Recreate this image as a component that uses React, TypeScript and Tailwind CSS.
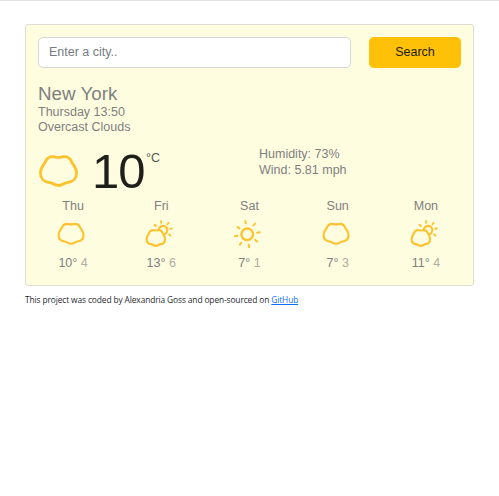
type IconKind = "cloud" | "partly" | "sun";

const CLOUD =
  "M19.5 2.5C17 2.5 16 1.7 13.6 1.7C10.2 1.7 8 3.2 6.6 6.4C5.4 9.4 1.4 12.4 1.4 18C1.4 23.4 5 26.9 10 27.3C13.8 27.6 15 30.5 19.5 30.5C24 30.5 25.2 27.6 29 27.3C34 26.9 37.6 23.4 37.6 18C37.6 12.4 33.6 9.4 32.4 6.4C31 3.2 28.8 1.7 25.4 1.7C23 1.7 22 2.5 19.5 2.5Z";

function WeatherIcon({ kind }: { kind: IconKind }) {
  return (
    <svg
      viewBox="0 0 36 36"
      className="mt-px block size-9"
      fill="none"
      stroke="#fdc32f"
      strokeWidth="2.1"
      strokeLinecap="round"
      strokeLinejoin="round"
    >
      {kind === "cloud" && (
        <g transform="translate(2.6 6.7) scale(.69)">
          <path d={CLOUD} strokeWidth="3.1" />
        </g>
      )}
      {kind === "partly" && (
        <>
          <g transform="translate(2.9 13.1) scale(.51 .55)">
            <path d={CLOUD} strokeWidth="4" />
          </g>
          <path d="M15.9 13.1A4.3 4.3 0 1 1 21.5 18.3" />
          <path
            d="M18.3 6.7L18.1 5.2M12.9 9.9L11.6 8.7M24.5 8.2L25.6 6.9M27.4 12.8L28.9 12.4M26.2 18.4L27.3 19.5"
            strokeWidth="2"
          />
        </>
      )}
      {kind === "sun" && (
        <>
          <circle cx="16.2" cy="18.3" r="5.8" strokeWidth="2.3" />
          <path
            d="M14.8 7.5L14.3 5M22.5 9.5L24 7.5M26.1 16.7L28.7 16.2M24.2 23.9L26.1 25.5M17.7 28.8L18.2 31.2M10.2 26.7L8.8 28.8M6.5 19.7L4 20.2M8.5 12.4L6.5 10.9"
            strokeWidth="2"
          />
        </>
      )}
    </svg>
  );
}

const days: { name: string; icon: IconKind; max: number; min: number }[] = [
  { name: "Thu", icon: "cloud", max: 10, min: 4 },
  { name: "Fri", icon: "partly", max: 13, min: 6 },
  { name: "Sat", icon: "sun", max: 7, min: 1 },
  { name: "Sun", icon: "cloud", max: 7, min: 3 },
  { name: "Mon", icon: "partly", max: 11, min: 4 },
];

export default function App() {
  return (
    <div className="h-[496px] border-t border-[#e2e2e2] bg-white px-[25px] pt-[23px] font-['Liberation_Sans',sans-serif] text-[12.5px] text-[#808080]">
      <main className="h-[262px] w-[449px] rounded-[3px] border border-[#deded2] bg-[#fefde0] px-3 pt-3">
        <form className="flex justify-between" onSubmit={(e) => e.preventDefault()}>
          <input
            type="search"
            placeholder="Enter a city.."
            className="h-[31px] w-[313px] rounded-[5px] border border-[#d5d8d8] bg-white px-[10px] pb-[2px] outline-none placeholder:text-[#747b83]"
          />
          <button className="h-[31px] w-[92px] rounded-[5px] bg-[#ffc107] text-[#21200f]">Search</button>
        </form>

        <h1 className="mt-[15px] text-[18.8px] leading-[22px]">New York</h1>
        <p className="leading-[15px]">Thursday 13:50</p>
        <p className="leading-[15px]">Overcast Clouds</p>

        <section className="mt-3 flex h-[50px]">
          <div className="flex w-[221px]">
            <svg
              viewBox="0 0 39 33"
              className="mt-[8px] ml-[1px] h-[33px] w-[39px]"
              fill="none"
              stroke="#fdc32f"
              strokeWidth="2.8"
            >
              <path d={CLOUD} />
            </svg>
            <span className="ml-[14px] w-[54px] text-[49px] leading-[48px] tracking-[-1px] text-[#1f1f1c]">10</span>
            <span className="mt-[4px] text-[12.4px] leading-[15px] text-[#55554f]">°C</span>
          </div>
          <div className="leading-[15.5px]">
            <p>Humidity: 73%</p>
            <p>Wind: 5.81 mph</p>
          </div>
        </section>

        <section className="-mx-[9px] grid grid-cols-5">
          {days.map((day) => (
            <div key={day.name} className="flex flex-col items-center">
              <span className="leading-[18px]">{day.name}</span>
              <WeatherIcon kind={day.icon} />
              <span className="mt-[2px] leading-[18px]">
                {day.max}° <span className="text-[#adada3]">{day.min}</span>
              </span>
            </div>
          ))}
        </section>
      </main>
      <footer className="mt-[8px] font-['Open_Sans',sans-serif] text-[8.4px] leading-[12px] tracking-[-0.115px] whitespace-nowrap text-[#262a2e]">
        This project was coded by Alexandria Goss and open-sourced on{" "}
        <a href="#" className="text-[#0d6efd] underline">
          GitHub
        </a>
      </footer>
    </div>
  );
}
